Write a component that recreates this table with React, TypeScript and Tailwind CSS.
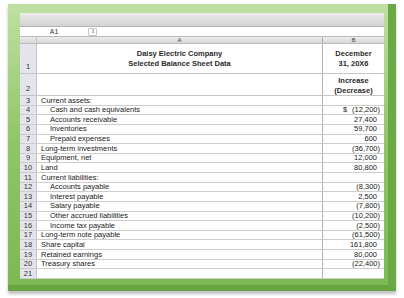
import React from "react"

type Row = { n: number; label: string; indent?: boolean; value?: string; dollar?: boolean }

const rows: Row[] = [
  { n: 3, label: "Current assets:" },
  { n: 4, label: "Cash and cash equivalents", indent: true, value: "(12,200)", dollar: true },
  { n: 5, label: "Accounts receivable", indent: true, value: "27,400" },
  { n: 6, label: "Inventories", indent: true, value: "59,700" },
  { n: 7, label: "Prepaid expenses", indent: true, value: "600" },
  { n: 8, label: "Long-term investments", value: "(36,700)" },
  { n: 9, label: "Equipment, net", value: "12,000" },
  { n: 10, label: "Land", value: "80,800" },
  { n: 11, label: "Current liabilities:" },
  { n: 12, label: "Accounts payable", indent: true, value: "(8,300)" },
  { n: 13, label: "Interest payable", indent: true, value: "2,500" },
  { n: 14, label: "Salary payable", indent: true, value: "(7,800)" },
  { n: 15, label: "Other accrued liabilities", indent: true, value: "(10,200)" },
  { n: 16, label: "Income tax payable", indent: true, value: "(2,500)" },
  { n: 17, label: "Long-term note payable", value: "(61,500)" },
  { n: 18, label: "Share capital", value: "161,800" },
  { n: 19, label: "Retained earnings", value: "80,000" },
  { n: 20, label: "Treasury shares", value: "(22,400)" },
  { n: 21, label: "" },
]

// numbers with a closing paren hang the paren outside the digit column
const Value = ({ v }: { v?: string }) => {
  if (!v) return null
  const neg = v.startsWith("(")
  return <span className={neg ? "" : "pr-[3px]"}>{v}</span>
}

export default function App() {
  return (
    <div
      className="w-[404px] h-[298px] bg-white pt-[4px] pl-[8px]"
      style={{ fontFamily: '"Liberation Sans", Arial, sans-serif' }}
    >
      {/* green frame */}
      <div className="w-[388px] h-[287px] pt-[9px] pl-[12px] pr-[4px] bg-gradient-to-b from-[#bfe0a2] via-[#8fc566] to-[#7cb953] border-r-[8px] border-b-[6px] border-r-[#6aa946] border-b-[#68a644] shadow-[0_3px_3px_rgba(0,0,0,0.25)]">
        <div className="w-[364px] bg-white text-[7.5px] text-[#222] leading-none">
          {/* toolbar */}
          <div className="h-[14px] bg-gradient-to-b from-[#ececec] to-[#d3d3d3] border-b border-[#b5b5b5]" />
          {/* name box row */}
          <div className="h-[10px] flex items-center border-b border-[#b9b9b9]">
            <div className="w-[68px] text-center text-[7px] text-[#333]">A1</div>
            <div className="w-[9px] h-[8px] flex items-center justify-center border border-[#c8c8c8] rounded-[1px] text-[5px] text-[#666]">
              ⇕
            </div>
          </div>
          {/* column header */}
          <div className="h-[7px] grid grid-cols-[17px_286px_61px] bg-gradient-to-b from-[#ececec] to-[#d8d8d8] border-b border-[#bcbcbc] text-[6px] text-[#444]">
            <div className="border-r border-[#c4c4c4]" />
            <div className="flex items-center justify-center border-r border-[#b0b0b0]">A</div>
            <div className="flex items-center justify-center">B</div>
          </div>
          {/* row 1 */}
          <div className="h-[30px] grid grid-cols-[17px_286px_61px] border-b border-[#c6c6c6]">
            <div className="bg-[#e4e5ec] border-r border-[#c4c4c4] flex items-end justify-center pb-[3px] text-[#333]">1</div>
            <div className="flex flex-col items-center pt-[6px] gap-[2px] font-bold text-[#2a2a2a] border-r border-[#b0b0b0]">
              <span>Daisy Electric Company</span>
              <span>Selected Balance Sheet Data</span>
            </div>
            <div className="flex flex-col items-center pt-[6px] gap-[2px] font-bold text-[#2a2a2a]">
              <span>December</span>
              <span>31, 20X6</span>
            </div>
          </div>
          {/* row 2 */}
          <div className="h-[22px] grid grid-cols-[17px_286px_61px] border-b border-[#c6c6c6]">
            <div className="bg-[#e4e5ec] border-r border-[#c4c4c4] flex items-end justify-center pb-[3px] text-[#333]">2</div>
            <div className="border-r border-[#b0b0b0]" />
            <div className="flex flex-col items-center pt-[3px] gap-[2px] font-bold text-[#2a2a2a]">
              <span>Increase</span>
              <span>(Decrease)</span>
            </div>
          </div>
          {rows.map((r) => (
            <div
              key={r.n}
              className="h-[9.63px] grid grid-cols-[17px_286px_61px] border-b border-[#cdcdcd]"
            >
              <div className="bg-[#e4e5ec] border-r border-[#c4c4c4] flex items-center justify-center text-[#333]">
                {r.n}
              </div>
              <div
                className={
                  "flex items-center border-r border-[#b0b0b0] " +
                  (r.indent ? "pl-[13px]" : "pl-[4px]")
                }
              >
                {r.label}
              </div>
              <div className="flex items-center justify-between pr-[4px] pl-[20px]">
                <span>{r.dollar ? "$" : ""}</span>
                <Value v={r.value} />
              </div>
            </div>
          ))}
        </div>
      </div>
    </div>
  )
}
